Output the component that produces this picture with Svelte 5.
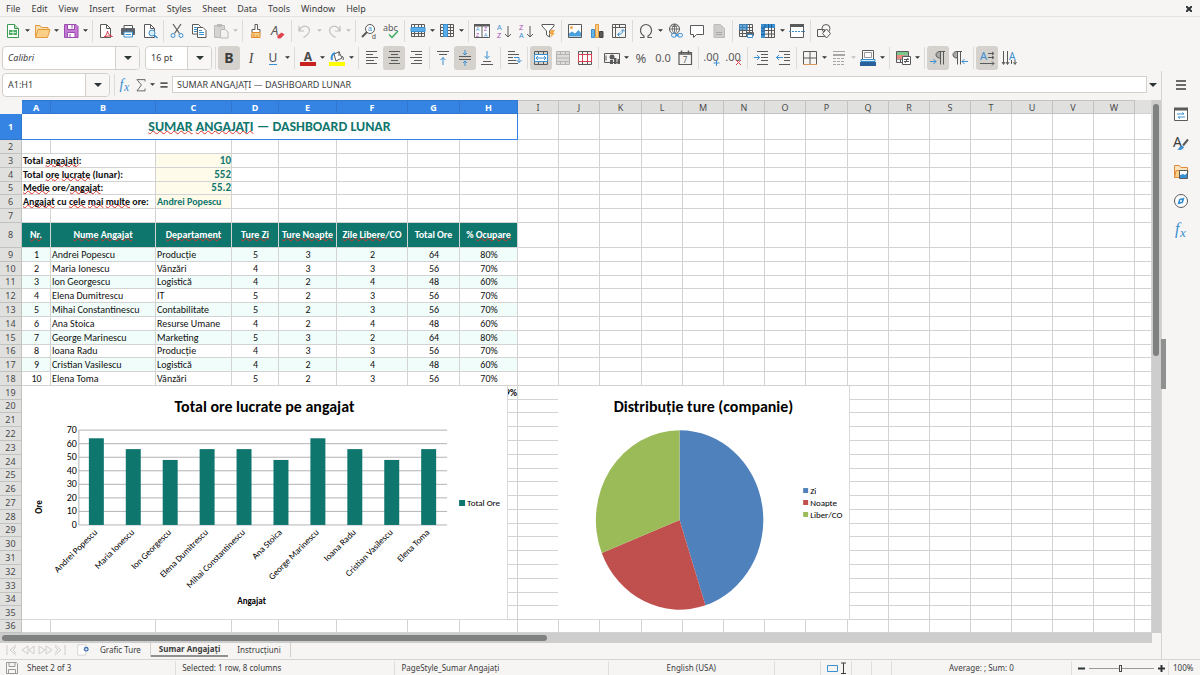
<script>
  const menus = ["File", "Edit", "View", "Insert", "Format", "Styles", "Sheet", "Data", "Tools", "Window", "Help"];

  const G = "#5a5a5a";
  const B = "#3a8fd0";

  function text(x, y, size, fill, str, extra = "") {
    return `<text x="${x}" y="${y}" font-family="Noto Sans, sans-serif" font-size="${size}" fill="${fill}" ${extra}>${str}</text>`;
  }
  function letter(x, y, size, fill, str) {
    return `<text x="${x}" y="${y}" font-family="Liberation Sans, sans-serif" font-size="${size}" fill="${fill}">${str}</text>`;
  }
  function line(d, stroke = G, width = 1) {
    return `<path d="${d}" fill="none" stroke="${stroke}" stroke-width="${width}"/>`;
  }
  const table = "M3.5 3.5h13v12h-13zM3.5 6.5h13M3.5 9.5h13M3.5 12.5h13M6.5 3.5v12M10.5 3.5v12M13.5 3.5v12";

  // every icon is drawn on a 20x20 canvas
  const icons = {
    new: `<path d="M4.500 3.500h7l4 4v9h-11z" fill="#fff" stroke="#3a9a52"/><path d="M11.500 3.500v4h4" fill="#b5e0bf" stroke="#3a9a52"/><path d="M6 9h8v5H6z" fill="#4caf63"/><path d="M7 11.500h6M10 9v5" stroke="#fff" stroke-width=".7"/>`,
    open: `<path d="M3.500 16V4.500h4.500l1.500 2h6.500v2" fill="#f9dfae" stroke="#e49a3c"/><path d="M3.500 16.500l2.500-8h12l-2.500 8z" fill="#fbcf85" stroke="#e49a3c"/>`,
    save: `<path d="M3.500 3.500h11.500l2 2v11h-13.500z" fill="#c479d3" stroke="#9c4bb0"/><path d="M6.500 3.500h7v5h-7z" fill="#fff" stroke="#9c4bb0"/><path d="M6.500 16.500v-5h7.500v5z" fill="#fff" stroke="#9c4bb0"/><path d="M11 4v3.500M9 13v3" stroke="#9c4bb0"/>`,
    pdf: `<path d="M4.500 3.500h6l4 4v9h-10z" fill="#fff" stroke="${G}"/>` + line("M10.500 3.500v4h4") + line("M8 16c2-1 3-3 3.500-6 .500 3 2 5 5 5.500-3-1-6-.500-8.500.500", "#d9404f"),
    print: `<path d="M6 7V4.500h8.500V7" fill="#fff" stroke="${G}"/><rect x="3" y="7" width="14" height="7" rx="1" fill="#5c6167"/><path d="M6 11h8.500v5H6z" fill="#fff" stroke="${B}"/>` + line("M7.500 13.500h5.500", B),
    preview: `<path d="M4.500 3.500h6l4 4v9h-10z" fill="#fff" stroke="${G}"/>` + line("M10.500 3.500v4h4") + `<circle cx="12" cy="12" r="3" fill="#d8ecf9" stroke="${B}"/>` + line("M14 14l3.500 3", B, 1.5),
    cut: line("M6 3l6.500 9.500M14 3L7.500 12.500", G, 1.2) + `<circle cx="6" cy="14.500" r="2" fill="none" stroke="${B}"/><circle cx="14" cy="14.500" r="2" fill="none" stroke="${B}"/>`,
    copy: `<path d="M3.500 3.500h6l2 2v7.500h-8z" fill="#fff" stroke="${G}"/>` + line("M5 6.500h4M5 8.500h4M5 10.500h3", B) + `<path d="M8.500 6.500h5.500l3 3v7h-8.500z" fill="#fff" stroke="${G}"/>` + line("M10 11.500h5M10 13.500h5M10 9.500h3", B),
    paste: `<path d="M3.500 4.500h10v12h-10z" fill="#d6d4d2" stroke="#bdbbb9"/><path d="M6 3h5v3H6z" fill="#bdbbb9"/><path d="M9.500 8.500h5l2.500 2.500v6h-7.500z" fill="#f2f2f1" stroke="#bdbbb9"/>`,
    brush: `<path d="M9 3.500h2.500v5H14v3H6v-3h3z" fill="#fff" stroke="${G}"/><path d="M6 11.500h8v5H5.500z" fill="#fbcf85" stroke="#e08a2c"/>` + line("M8 16v-3M11 16v-2", "#e08a2c"),
    clear: text(3, 14, 13, G, "A", 'font-style="italic"') + `<path d="M9 15l4.500-3.500 3 2-4 4h-2.500z" fill="#e0434b"/>`,
    undo: line("M4 5v5h5M4.500 9.500c1-3 4-5 7-4 4 1.500 4 6 0 9l-3 2", "#c2c0be", 1.2),
    redo: line("M16 5v5h-5M15.500 9.500c-1-3-4-5-7-4-4 1.500-4 6 0 9l3 2", "#c2c0be", 1.2),
    find: `<circle cx="11" cy="8" r="4.500" fill="#fff" stroke="${G}"/>` + line("M8 11l-5 5", G, 2) + letter(9, 10, 7, B, "a") + letter(13, 17.5, 7, "#444", "d"),
    spell: text(2, 10, 9, G, "abc") + line("M8 13.500l3 3 6-6.500", "#3bab62", 1.5),
    row: line(table) + `<path d="M3 6.500h14v4H3z" fill="#5aaee8" stroke="${B}"/>`,
    column: line(table) + `<path d="M6.500 3.500h4v12h-4z" fill="#5aaee8" stroke="${B}"/>`,
    sort: `<path d="M2.500 3.500h15v13h-15z" fill="#fff" stroke="${G}"/><path d="M2 3h16v2.500H2z" fill="${G}"/>` + line("M10 5v11", G) + letter(4, 10, 5, B, "A") + letter(4, 16, 5, "#a347ba", "Z") + letter(12, 10, 5, "#a347ba", "Z") + letter(12, 16, 5, B, "A"),
    asc: letter(3, 8.5, 7, B, "A") + letter(3, 17, 7, "#a347ba", "Z") + line("M14 5v11M11 13l3 3 3-3"),
    desc: letter(3, 8.5, 7, "#a347ba", "Z") + letter(3, 17, 7, B, "A") + line("M14 5v11M11 13l3 3 3-3"),
    filter: `<path d="M4 3.500h12v1.500l-4.500 5v6l-3-2v-4L4 5z" fill="#fff" stroke="${G}"/><path d="M13 9h4l-2 3h2l-5 5 1.500-4H11z" fill="#f3a64a"/>`,
    image: `<path d="M3.500 3.500h13v13h-13z" fill="#fff" stroke="${G}"/><path d="M4 15.500v-3l3-2 3 2 3.500-3.500 2.500 3v3.500z" fill="#4a9fdc"/><circle cx="6.500" cy="6.500" r="1.500" fill="#f3a64a"/>`,
    chart: `<path d="M4.500 8.500h3v8h-3z" fill="#6bb4e8" stroke="${B}"/><path d="M8.500 3.500h3v13h-3z" fill="#fbcf85" stroke="#e49a3c"/><path d="M12.500 10.500h3.500v6h-3.500z" fill="${G}" stroke="#444"/>`,
    pivot: line("M3.500 3.500h13v13h-13zM3.500 6.500h13M6.500 3.500v13M10.500 3.500v3") + line("M9 13.500c3 0 5-1.500 5-4.500M12 10.500l2-2 2 2M10.500 11.500l-2 2 2 2", B),
    omega: line("M4 16.500h4v-1.500c-2.500-1.500-3.500-3-3.500-5.500C4.500 6 7 3.500 10 3.500s5.500 2.500 5.500 6c0 2.500-1 4-3.500 5.500v1.500h4", G, 1.2),
    link: `<circle cx="9.500" cy="8" r="5" fill="none" stroke="${G}"/>` + line("M4.500 8h10M9.500 3v10M6 4.500c2 1.500 5 1.500 7 0M9.500 3c-3 3-3 7 0 10M9.500 3c3 3 3 7 0 10", G, 0.8) + `<rect x="6.500" y="12.500" width="5" height="3.500" rx="1.700" fill="#f6f5f4" stroke="${B}"/><rect x="12.500" y="12.500" width="5" height="3.500" rx="1.700" fill="#f6f5f4" stroke="${B}"/>` + line("M10 14.200h4", B),
    comment: `<path d="M3.500 4.500h13v9h-7l-3 3v-3h-3z" fill="#fff" stroke="${G}"/>`,
    header: `<path d="M5 3.500h6.500l4 4v9H5z" fill="#cfcdcb" stroke="#bdbbb9"/>` + line("M7 11.500h6M7 13.500h6", "#aaa"),
    printarea: line(table) + `<path d="M3 3h9v6H3z" fill="${B}" opacity=".75"/><rect x="10" y="11" width="8" height="4" rx="1" fill="#5c6167"/><path d="M11.500 13.500h5v3h-5z" fill="#fff" stroke="${B}"/>`,
    freeze: line("M3.500 3.500h13v13h-13zM3.500 9.500h13M3.500 13h13M10.500 3.500v13M13.500 3.500v13") + `<path d="M3 3h14v4H7v10H3z" fill="${B}"/>` + line("M7 3v4H3M10.500 3v4M13.500 3v4M3 10h4M3 13.500h4", "#205f94"),
    split: `<path d="M3.500 3.500h13v13h-13z" fill="#fff" stroke="${G}"/><path d="M3 3h14v3H3z" fill="${G}"/>` + `<path d="M2 10.500h16" stroke="${B}" stroke-dasharray="2 1"/>`,
    shapes: `<path d="M3.500 8.500h7v7h-7z" fill="none" stroke="${G}"/><circle cx="12" cy="7.500" r="4" fill="none" stroke="${G}"/>` + `<path d="M12.500 8l4 4.500-4 4.500-4-4.500z" fill="#f6f5f4" stroke="${G}"/>`,

    bold: text(10, 15, 14, "#3c3c3c", "B", 'font-weight="700" text-anchor="middle"'),
    italic: text(10, 15, 14, "#4a4a4a", "I", 'font-style="italic" text-anchor="middle" style="font-family:Liberation Serif"'),
    underline: text(10, 14, 12, "#4a4a4a", "U", 'text-anchor="middle"') + line("M6 16.500h8", B),
    color: text(10, 13, 12, "#4a4a4a", "A", 'text-anchor="middle" font-weight="700"') + `<path d="M2 14h16v4H2z" fill="#c9211e"/>`,
    fill: `<path d="M7 6l5-2 3 6-6 3z" fill="#fff" stroke="${G}"/>` + line("M5 12c-1-3 0-6 3-7", B, 2) + line("M12 3v5M15 8c1.500 1 1.500 3 1 4") + `<path d="M2 14h16v4H2z" fill="#ffff00"/>`,
    left: line("M4 3.500h11M4 6.500h7M4 9.500h12M4 12.500h8M4 15.500h11"),
    center: line("M5 3.500h11M7 6.500h7M4 9.500h12M7 12.500h7M5 15.500h11"),
    right: line("M5 3.500h11M9 6.500h7M4 9.500h12M8 12.500h8M5 15.500h11"),
    top: line("M4 3.500h12M6 6.500h8") + line("M10 17V9.500M7.500 12L10 9.500l2.500 2.500", B),
    middle: line("M4 8.500h12M4 11.500h12") + line("M10 2v5M8 5l2 2 2-2M10 18v-5M8 15l2-2 2 2", B),
    bottom: line("M6 13.500h8M4 16.500h12") + line("M10 3v7.500M7.500 8l2.500 2.500L12.500 8", B),
    wrap: line("M4 3.500h7M4 6.500h11M4 9.500h5M4 12.500h8M4 15.500h10") + line("M10 9.500h5v5M12.500 12l2.500 2.500 2.500-2.500", B),
    merge: line("M3.500 3.500h13v13h-13zM7.500 3.500v3M12.500 3.500v3M7.500 13.500v3M12.500 13.500v3") + `<path d="M3.500 6.500h13v7h-13z" fill="#fff" stroke="${B}"/>` + line("M5 10h10M7 8l-2 2 2 2M13 8l2 2-2 2", B),
    unmerge: `<path d="M3.500 3.500h13v13h-13z" fill="#dddbd9" stroke="#b5b3b1"/>` + line("M3.500 6.500h13M3.500 13.500h13M3.500 10h13M7.500 3.500v3M12.500 3.500v3M7.500 13.500v3M12.500 13.500v3", "#b5b3b1"),
    splitcells: line("M3.500 3.500h13v13h-13zM7.500 3.500v3M12.500 3.500v3M7.500 13.500v3M12.500 13.500v3") + `<path d="M3.500 6.500h13v7h-13zM7.500 6.500v7M12.500 6.500v7" fill="#fff" stroke="#d9404f"/>`,
    currency: `<path d="M2.500 5.500h15v9h-15z" fill="none" stroke="${G}"/><circle cx="10" cy="9" r="2.500" fill="${G}"/><path d="M8 12h3v4H8zM12 10h2.500v6H12zM15.500 11H18v5h-2.500z" fill="${G}"/>` + line("M4 7.500v5"),
    percent: text(10, 15, 13, G, "%", 'text-anchor="middle"'),
    number: text(10, 14, 11, G, "0.0", 'text-anchor="middle"'),
    date: `<path d="M4 4.500h12.500v12H4z" fill="none" stroke="${G}" stroke-width="1.200"/>` + line("M4 6h12.500M6.500 2.500v3M13.500 2.500v3", G, 1.5) + text(10, 15, 8, G, "7", 'text-anchor="middle"'),
    adddec: text(9, 13, 11, G, ".00", 'text-anchor="middle"') + line("M14.500 12v6M11.500 15h6", B),
    deldec: text(9, 13, 11, G, ".00", 'text-anchor="middle"') + line("M12 12l5 5M17 12l-5 5", "#e0434b"),
    indent: line("M6 3.500h11M10 6.500h7M10 9.500h7M10 12.500h7M6 16.500h11") + line("M3 9.500h6M6 7l2.500 2.500L6 12", B),
    outdent: line("M6 3.500h11M11 6.500h6M11 9.500h6M11 12.500h6M6 16.500h11") + line("M3 9.500h7M6 7L3.500 9.500 6 12", B),
    borders: line("M3.500 3.500h13v13h-13zM10 3.500v13M3.500 10h13") + line("M3 16.500h14", "#d9995a"),
    style: line("M4 3.500h12", "#a8a6a4") + line("M4 6.500h12M4 7.500h12", "#a8a6a4") + `<path d="M4 10.500h12M4 13.500h12M4 16.500h12" stroke="#a8a6a4" stroke-dasharray="3 1"/>`,
    background: `<path d="M4.500 2.500h11v9h-11z" fill="#fff" stroke="${G}"/><path d="M6.500 4.500h7v5h-7z" fill="#fff" stroke="#9a9a9a"/><path d="M3 11.500h14v2H3z" fill="#dcedf8" stroke="${B}"/><path d="M2 14h16v4H2z" fill="#2a6099"/>`,
    cond: line("M3.500 3.500h12v11h-12zM3.500 7h12M3.500 11h12M7.500 3.500v11") + `<path d="M4 4h11v3H4z" fill="#7cc68b"/><path d="M4 7h7v4H4z" fill="#ef8a80"/><path d="M9.500 8.500h8v8h-8z" fill="#fff" stroke="${G}"/>` + line("M11 11.500h5M11 13.500h5M15 10l-3 5"),
    ltr: line("M11 3.500h6M12.500 3.500v13M15.500 3.500v13") + `<path d="M12.500 3.500c-6-.500-6 7 0 6.500z" fill="#aaa" stroke="${G}"/>` + line("M2 13.500h6M5.500 11L8 13.500 5.500 16", B),
    rtl: line("M6 3.500h6M7.500 3.500v13M10.500 3.500v13") + `<path d="M7.500 3.500c-6-.500-6 7 0 6.500z" fill="#aaa" stroke="${G}"/>` + line("M18 13.500h-6M14.500 11L12 13.500l2.500 2.500", B),
    textrow: text(3, 12, 11, B, "A") + line("M11 5.500h6M11 9.500h6M3 15.500h14M15 4l2 1.500-2 1.500M15 8l2 1.500-2 1.500M15 13.500l2 2-2 2"),
    textcol: text(10, 12, 10, B, "A") + line("M4.500 3v13M8.500 3v13M12.500 12v4M16 12v4M3 14l1.500 2.500L6 14M7 14l1.500 2.500L10 14M14.500 14l1.500 2.500 1.500-2.500"),

    fx: text(4, 14, 16, B, "f", 'font-style="italic" style="font-family:Liberation Serif"') + text(9, 17, 13, B, "x", 'font-style="italic" style="font-family:Liberation Serif"'),
    sum: line("M14.500 6V4h-9l5 6-5 6.500h9V14", G),
    equals: line("M6 8h8M6 12h8", G, 2),
    menu: line("M5 6h10M5 10h10M5 14h10", "#3c3c3c", 1.5),
    properties: `<path d="M3.500 4.500h13v12h-13z" fill="#fff" stroke="${G}"/><path d="M3 3.500h14v3H3z" fill="${G}"/>` + line("M6 10h7M11 8.500l2 1.500M14 13H7M9 14.500L7 13", B),
    styles: text(2, 14, 14, "#3c3c3c", "A") + line("M17 6.500l-5 6", G, 2) + `<path d="M6 16.500c2 0 2-3 4.500-4l2.500 1.500c-1 3-4 3.500-7 2.500z" fill="${B}"/>`,
    gallery: `<path d="M3.500 15.500v-12h5l1.500 2h6.500v3" fill="#fbe3bd" stroke="#e08a3c"/><path d="M3.500 15.500l1.500-7h12l-1 7z" fill="#fbcf85" stroke="#e08a3c"/><path d="M8.500 8.500h8v8h-8z" fill="#fff" stroke="${G}"/><path d="M9 16v-3l3-1 2 1 2-2v5z" fill="${B}"/>`,
    navigator: `<circle cx="10" cy="10" r="6.500" fill="#fff" stroke="${G}"/><path d="M13.500 6.500l-1.500 5.500-5.500 1.500L8 8z" fill="${B}"/><circle cx="10" cy="10" r="1" fill="#fff"/>`,
    floppy: `<path d="M4.500 4.500h10l1 1v10h-11z" fill="none" stroke="#9a9a9a"/>` + line("M7 4.500v4h6v-4M6.500 15.500v-4h7v4", "#9a9a9a"),
    addsheet: `<path d="M3.500 3.500h10v13h-10z" fill="#fff" stroke="#cfcdcb"/><circle cx="14" cy="9" r="3" fill="#2c5fae"/>` + line("M12 9h4M14 7v4", "#fff"),
  };

  // "|" draws a separator, "+" puts a drop-down arrow after the icon, "*" marks a pressed one
  const standard = "new+ open+ save+ | pdf print preview | cut copy paste+ | brush clear | undo+ redo+ | find spell | row+ column+ | sort asc desc filter | image chart pivot | omega+ link comment header | printarea freeze+ split | shapes".split(" ");
  const formatting = "bold* italic underline+ | color+ fill+ | left center* right | top middle* bottom | wrap | merge* unmerge splitcells | currency+ percent number date | adddec deldec | indent outdent | borders+ style+ background+ | cond+ | ltr* rtl | textrow* textcol".split(" ");
  const sidebar = ["menu", "properties", "styles", "gallery", "navigator", "fx"];
  const dimmed = ["paste", "undo", "redo", "style"];

  const letters = "ABCDEFGHIJKLMNOPQRSTUVW".split("");
  const widths = [29, 105, 76, 47, 58, 71, 52, 58, 41, 41, 42, 41, 41, 41, 41, 42, 41, 41, 41, 41, 41, 41, 41];
  const blanks = letters.slice(8).concat("X");

  // "~" on either side marks a misspelled word
  const summary = [
    { label: "Total ~angajați~:", value: "10" },
    { label: "Total ~ore~ ~lucrate~ (lunar):", value: "552" },
    { label: "~Medie~ ore/~angajat~:", value: "55.2" },
    { label: "~Angajat~ cu ~cele~ ~mai~ ~multe~ ore:", value: "Andrei Popescu" },
  ];
  const heads = ["~Nr.~", "~Nume~ ~Angajat~", "~Departament~", "~Ture Zi~", "~Ture Noapte~", "~Zile Libere~/CO", "Total Ore", "% ~Ocupare~"];
  const staff = [
    ["Andrei Popescu", "Producție", 5, 3, 2, 64, "80%"],
    ["Maria Ionescu", "Vânzări", 4, 3, 3, 56, "70%"],
    ["Ion Georgescu", "Logistică", 4, 2, 4, 48, "60%"],
    ["Elena Dumitrescu", "IT", 5, 2, 3, 56, "70%"],
    ["Mihai Constantinescu", "Contabilitate", 5, 2, 3, 56, "70%"],
    ["Ana Stoica", "Resurse Umane", 4, 2, 4, 48, "60%"],
    ["George Marinescu", "Marketing", 5, 3, 2, 64, "80%"],
    ["Ioana Radu", "Producție", 4, 3, 3, 56, "70%"],
    ["Cristian Vasilescu", "Logistică", 4, 2, 4, 48, "60%"],
    ["Elena Toma", "Vânzări", 5, 2, 3, 56, "70%"],
  ];
  const rest = Array.from({ length: 18 }, (_, i) => 19 + i);

  function rowHeight(n) {
    if (n === 1) return 26;
    if (n === 8) return 25;
    return [5, 11, 16, 20, 25, 29, 34, 36].includes(n) ? 13 : 14;
  }

  const ticks = [0, 10, 20, 30, 40, 50, 60, 70];
  const y = (v) => 139 - (v * 95) / 70;
  const x = (i) => 57 + 37 * i + 18;

  const shares = [
    { label: "Zi", value: 45, color: "#4f81bd" },
    { label: "Noapte", value: 24, color: "#c0504d" },
    { label: "Liber/CO", value: 31, color: "#9bbb59" },
  ];
  function slice(i) {
    const from = shares.slice(0, i).reduce((sum, s) => sum + s.value, 0);
    const to = from + shares[i].value;
    const at = (v) => {
      const a = (v / 100) * 2 * Math.PI;
      return `${122 + 84 * Math.sin(a)} ${134 - 90 * Math.cos(a)}`;
    };
    return `M122 134L${at(from)}A84 90 0 0 1 ${at(to)}z`;
  }
</script>

{#snippet icon(name)}
  <svg class="icon" viewBox="0 0 20 20" aria-hidden="true">{@html icons[name]}</svg>
{/snippet}

{#snippet arrow()}
  <svg class="arrow" viewBox="0 0 8 4" aria-hidden="true"><path d="M0 0h8L4 4z" /></svg>
{/snippet}

{#snippet tools(list)}
  {#each list as item}
    {#if item === "|"}
      <span class="sep"></span>
    {:else}
      {@const name = item.replace(/[+*]/, "")}
      <button class="tool" class:pressed={item.endsWith("*")} aria-label={name}>{@render icon(name)}</button>
      {#if item.endsWith("+")}
        <button class="drop" class:dim={dimmed.includes(name)} aria-label="{name} options">{@render arrow()}</button>
      {/if}
    {/if}
  {/each}
{/snippet}

{#snippet words(str)}{#each str.split("~") as part, i}{#if i % 2}<span class="typo">{part}</span>{:else}{part}{/if}{/each}{/snippet}

{#snippet empty(cols)}{#each cols as _}<td></td>{/each}{/snippet}

<div class="app">
  <header>
    <nav class="menubar">
      {#each menus as menu}
        <button>{menu}</button>
      {/each}
      <button class="close" aria-label="Close"><svg viewBox="0 0 6 6"><path d="M0 0l6 6M6 0L0 6" /></svg></button>
    </nav>
    <div class="toolbar">{@render tools(standard)}</div>
    <div class="toolbar">
      <label class="combo font">
        <select aria-label="Font name"><option>Calibri</option></select>
        <span>{@render arrow()}</span>
      </label>
      <label class="combo size">
        <select aria-label="Font size"><option>16 pt</option></select>
        <span>{@render arrow()}</span>
      </label>
      <span class="sep"></span>
      {@render tools(formatting)}
    </div>
  </header>

  <div class="work">
    <main>
      <div class="formula">
        <div class="combo name">
          <input aria-label="Name box" value="A1:H1" />
          <button aria-label="Named ranges">{@render arrow()}</button>
        </div>
        <span class="sep"></span>
        <button class="small" aria-label="Function wizard">{@render icon("fx")}</button>
        <button class="small" aria-label="Sum">{@render icon("sum")}</button>
        <button class="drop" aria-label="Sum options">{@render arrow()}</button>
        <button class="small" aria-label="Formula">{@render icon("equals")}</button>
        <input class="line" aria-label="Input line" value="SUMAR ANGAJAȚI — DASHBOARD LUNAR" />
        <button class="expand" aria-label="Expand">{@render arrow()}</button>
      </div>

      <div class="pane">
        <div class="sheet">
          <table>
            <colgroup>
              <col style="width: 22px" />
              {#each widths as w}
                <col style="width: {w}px" />
              {/each}
              <col />
            </colgroup>
            <thead>
              <tr>
                <td class="corner"></td>
                {#each letters as letter, i}
                  <th scope="col" class:on={i < 8}>{letter}</th>
                {/each}
                <td class="edge"></td>
              </tr>
            </thead>
            <tbody>
              <tr style="height: {rowHeight(1)}px">
                <th scope="row" class="on">1</th>
                <td class="title" colspan="8">{@render words("~SUMAR~ ~ANGAJAȚI~ — DASHBOARD LUNAR")}</td>
                {@render empty(blanks)}
              </tr>
              <tr style="height: {rowHeight(2)}px">
                <th scope="row">2</th>
                {@render empty([...letters, "X"])}
              </tr>
              {#each summary as { label, value }, i}
                <tr style="height: {rowHeight(3 + i)}px">
                  <th scope="row">{3 + i}</th>
                  <td class="label" colspan="2">{@render words(label)}</td>
                  <td class="value" class:number={i < 3}>{value}</td>
                  {@render empty(letters.slice(2))}
                </tr>
              {/each}
              <tr style="height: {rowHeight(7)}px">
                <th scope="row">7</th>
                {@render empty([...letters, "X"])}
              </tr>
              <tr style="height: {rowHeight(8)}px">
                <th scope="row">8</th>
                {#each heads as head}
                  <td class="head">{@render words(head)}</td>
                {/each}
                {@render empty(blanks)}
              </tr>
              {#each staff as person, i}
                <tr class:even={i % 2 === 0} style="height: {rowHeight(9 + i)}px">
                  <th scope="row">{9 + i}</th>
                  <td class="data mid">{i + 1}</td>
                  {#each person as cell, j}
                    <td class="data" class:mid={j > 1}>{cell}</td>
                  {/each}
                  {@render empty(blanks)}
                </tr>
              {/each}
              {#each rest as n}
                <tr style="height: {rowHeight(n)}px">
                  <th scope="row">{n}</th>
                  {@render empty(letters.slice(0, 7))}
                  <td class="total">{n === 19 ? "69%" : ""}</td>
                  {@render empty(blanks)}
                </tr>
              {/each}
            </tbody>
          </table>

          <svg class="chart bars" viewBox="0 0 486 233" role="img" aria-label="Total ore lucrate pe angajat">
            <text class="heading" x="243" y="26">Total ore lucrate pe angajat</text>
            {#each ticks as t}
              <path class="grid" d="M57 {y(t)}H426" />
              <text class="tick" x="55" y={y(t) + 3}>{t}</text>
            {/each}
            <path class="grid" d="M57 44V139" />
            {#each staff as person, i}
              <rect x={x(i) - 8} y={y(person[5])} width="15" height={139 - y(person[5])} fill="#0f766e" />
              <text class="who" transform="translate({x(i) + 1} 147) rotate(-45)">{person[0]}</text>
            {/each}
            <text class="axis" transform="translate(20 121) rotate(-90)">Ore</text>
            <text class="axis" x="230" y="218">Angajat</text>
            <rect x="438" y="114" width="6" height="6" fill="#0f766e" />
            <text class="legend" x="446" y="120">Total Ore</text>
          </svg>

          <svg class="chart pie" viewBox="0 0 292 233" role="img" aria-label="Distribuție ture (companie)">
            <text class="heading" x="146" y="26">Distribuție ture (companie)</text>
            {#each shares as share, i}
              <path d={slice(i)} fill={share.color} />
              <rect x="246" y={102 + i * 12} width="5" height="5" fill={share.color} />
              <text class="legend" x="253" y={108 + i * 12}>{share.label}</text>
            {/each}
          </svg>
        </div>
        <div class="vscroll"><i></i></div>
        <div class="grip"></div>
      </div>
      <div class="hscroll"><i></i></div>

      <div class="tabs">
        <svg class="nav" viewBox="0 0 60 12" aria-hidden="true">
          <path d="M1 1v10M10 1L4 6l6 5M10 3L7 6l3 3M22 2l-6 4 6 4zM28 2l-5 4 5 4zM33 2l6 4-6 4zM40 2l6 4-6 4zM49 1l6 5-6 5M49 3l3 3-3 3M59 1v10" />
        </svg>
        <button class="small" aria-label="Add sheet">{@render icon("addsheet")}</button>
        <button class="tab">Grafic Ture</button>
        <button class="tab current">Sumar Angajați</button>
        <button class="tab">Instrucțiuni</button>
      </div>
    </main>

    <aside>
      {#each sidebar as name}
        <button aria-label={name}>{@render icon(name)}</button>
      {/each}
    </aside>
  </div>

  <footer>
    <span class="saved">{@render icon("floppy")}</span>
    <span class="sheets">Sheet 2 of 3</span>
    <span class="selected">Selected: 1 row, 8 columns</span>
    <span class="style">PageStyle_Sumar Angajați</span>
    <span class="language">English (USA)</span>
    <span class="gap"></span>
    <span class="mode">
      <svg viewBox="0 0 20 12" aria-hidden="true">
        <path d="M.5 3.500h10v6H.5z" stroke="#3a8fd0" /><path d="M14 1h5M14 11.500h5M16.500 1v10.500" stroke="#3c3c3c" />
      </svg>
    </span>
    <span class="tiny"></span>
    <span class="tiny"></span>
    <span class="sum">Average: ; Sum: 0</span>
    <span class="zoom">
      <button aria-label="Zoom out"><svg viewBox="0 0 7 7"><path d="M0 3.500h7" /></svg></button>
      <input type="range" aria-label="Zoom" min="0" max="100" value="48" />
      <button aria-label="Zoom in"><svg viewBox="0 0 7 7"><path d="M0 3.500h7M3.500 0v7" /></svg></button>
    </span>
    <span class="percent">100%</span>
  </footer>
</div>

<style>
  :global(body) {
    margin: 0;
    background: #f6f5f4;
  }

  .app {
    display: flex;
    flex-direction: column;
    min-height: 100vh;
    background: #f6f5f4;
    color: #3c3c3c;
    font: 9px/12px "Noto Sans", sans-serif;
  }

  .app,
  .app * {
    box-sizing: border-box;
  }

  button,
  input,
  select {
    margin: 0;
    padding: 0;
    border: 0;
    background: none;
    color: inherit;
    font: inherit;
  }

  button {
    display: flex;
    align-items: center;
    justify-content: center;
    flex: none;
  }

  .icon {
    display: block;
    flex: none;
    width: 20px;
    height: 20px;
  }

  .arrow {
    display: block;
    width: 8px;
    height: 4px;
    fill: #2e3436;
  }

  .menubar {
    display: flex;
    align-items: center;
    gap: 11px;
    height: 17px;
    padding: 1px 8px 0 6px;
    border-bottom: 1px solid #e4e2e0;
  }

  .close {
    margin-left: auto;
  }

  .close svg {
    width: 6px;
    height: 6px;
    fill: none;
    stroke: #2e3436;
    stroke-width: 2;
  }

  .toolbar {
    display: flex;
    align-items: center;
    height: 27px;
    padding-left: 2px;
  }

  .tool {
    width: 22px;
    height: 24px;
    border-radius: 3px;
  }

  .pressed {
    background: #d5d1cd;
  }

  .drop {
    width: 7px;
    height: 24px;
  }

  .drop .arrow {
    width: 5px;
    height: 3px;
  }

  .dim .arrow {
    fill: #c2c0be;
  }

  .sep {
    flex: none;
    width: 5px;
    height: 22px;
    background: linear-gradient(#dddbd8, #dddbd8) center / 1px 100% no-repeat;
  }

  .drop + .sep {
    width: 6px;
  }

  .combo {
    display: flex;
    flex: none;
    height: 24px;
    border: 1px solid #d3d0cc;
    border-radius: 4px;
    background: #fff;
    overflow: hidden;
  }

  .combo select,
  .combo input {
    flex: 1;
    min-width: 0;
    padding-left: 5px;
    appearance: none;
  }

  .combo span,
  .combo button {
    display: flex;
    align-items: center;
    justify-content: center;
    width: 24px;
    border-left: 1px solid #d3d0cc;
    background: #f8f7f6;
  }

  .font {
    width: 138px;
    font-style: italic;
  }

  .size {
    width: 67px;
    margin: 0 1px 0 5px;
  }

  .work {
    display: flex;
    flex: 1;
  }

  main {
    display: flex;
    flex: 1;
    flex-direction: column;
    min-width: 0;
    border-right: 1px solid #d6d4d1;
  }

  .formula {
    display: flex;
    align-items: center;
    height: 29px;
    padding: 0 2px 2px;
  }

  .name {
    width: 108px;
    margin-right: 2px;
  }

  .small {
    width: 16px;
    height: 16px;
  }

  .formula .small .icon {
    width: 18px;
    height: 18px;
  }

  .line {
    flex: 1;
    min-width: 0;
    height: 17px;
    padding: 0 4px;
    border: 1px solid #d3d0cc;
    background: #fff;
  }

  .expand {
    width: 12px;
  }

  .pane {
    position: relative;
    display: flex;
    flex: 1;
  }

  .sheet {
    position: relative;
    flex: 1;
    min-width: 0;
    overflow: hidden;
    background: #fff;
  }

  table {
    width: 100%;
    table-layout: fixed;
    border-collapse: separate;
    border-spacing: 0;
    line-height: 12px;
  }

  td,
  th {
    padding: 0;
    border: solid #d3d3d3;
    border-width: 0 1px 1px 0;
    white-space: nowrap;
  }

  th {
    background: #e0e0df;
    border-color: #c2c2c1;
    color: #4a4a4a;
    font-weight: 400;
    text-align: center;
  }

  thead tr {
    height: 14px;
  }

  thead th {
    border-top: 1px solid #c2c2c1;
    line-height: 11px;
  }

  th.on {
    background: #3584e4;
    border-color: #2f76cc;
    color: #fff;
    font-weight: 700;
  }

  .corner {
    border-color: #f6f5f4;
    background: #f6f5f4;
  }

  .edge {
    background: #e0e0df;
  }

  .title,
  .label,
  .value,
  .head,
  .data,
  .total,
  .chart {
    font-family: Carlito, Lato, sans-serif;
  }

  .title {
    border-color: #3584e4;
    color: #0f766e;
    font-size: 14px;
    font-weight: 700;
    text-align: center;
  }

  .label {
    padding-left: 1px;
    color: #111;
    font-size: 10px;
    font-weight: 700;
  }

  .value {
    padding-left: 1px;
    background: #fffbeb;
    color: #0f766e;
    font-size: 10px;
    font-weight: 700;
  }

  .number {
    font-size: 11px;
    text-align: right;
  }

  .head {
    background: #0f766e;
    color: #fff;
    font-size: 10px;
    font-weight: 700;
    text-align: center;
  }

  .data {
    padding-left: 1px;
    color: #111;
    font-size: 10px;
  }

  .mid {
    text-align: center;
  }

  .even .data {
    background: #f0fdfa;
  }

  .total {
    color: #111;
    font-size: 10px;
    font-weight: 700;
    text-align: right;
  }

  .typo {
    text-decoration: underline wavy #d8322c 1px;
    text-decoration-skip-ink: none;
    text-underline-offset: -1px;
  }

  .chart {
    position: absolute;
    top: 286px;
    height: 234px;
    border: solid #d9d9d9;
    border-width: 0 1px 1px 0;
    background: #fff;
    font-size: 10px;
  }

  .bars {
    left: 22px;
    width: 486px;
  }

  .pie {
    left: 558px;
    width: 292px;
  }

  .heading {
    font-size: 16px;
    font-weight: 700;
    text-anchor: middle;
  }

  .grid {
    stroke: #b3b3b3;
  }

  .tick {
    text-anchor: end;
  }

  .who {
    font-size: 9px;
    text-anchor: end;
  }

  .axis {
    font-size: 9px;
    font-weight: 700;
    text-anchor: middle;
  }

  .legend {
    font-size: 9px;
  }

  .vscroll {
    width: 9px;
    padding: 4px 2px 4px 1px;
    background: #cdcdcd;
  }

  .vscroll i {
    display: block;
    height: 48%;
    border-radius: 3px;
    background: #7f8080;
  }

  .grip {
    position: absolute;
    top: 239px;
    right: -5px;
    width: 5px;
    height: 50px;
    background: #8f9090;
  }

  .hscroll {
    height: 10px;
    margin-right: 9px;
    padding: 2px;
    background: #cdcdcd;
  }

  .hscroll i {
    display: block;
    width: 47.5%;
    height: 6px;
    border-radius: 3px;
    background: #7f8080;
  }

  .tabs {
    display: flex;
    align-items: center;
    height: 16px;
    padding: 0 0 2px 6px;
    font-size: 8px;
  }

  .nav {
    width: 60px;
    height: 12px;
    margin-right: 9px;
    fill: none;
    stroke: #cfcdcb;
  }

  .tabs .small .icon {
    width: 16px;
    height: 16px;
  }

  .tab {
    height: 14px;
    padding: 0 9px;
    border-right: 1px solid #d3d0cc;
  }

  .current {
    padding: 0 8px;
    border-right: 0;
    border-bottom: 2px solid #8f9090;
    font-weight: 700;
  }

  aside {
    display: flex;
    flex-direction: column;
    align-items: center;
    gap: 9px;
    width: 38px;
    padding-top: 4px;
  }

  footer {
    display: flex;
    align-items: center;
    height: 17px;
    border-top: 1px solid #d6d4d1;
    font-size: 8px;
  }

  footer > span {
    display: flex;
    align-items: center;
    height: 14px;
    padding-left: 6px;
    border-left: 1px solid #e0dedb;
  }

  footer .saved {
    width: 27px;
    padding-left: 2px;
    border: 0;
  }

  footer .sheets {
    flex: 1 0 148px;
    padding: 0;
    border: 0;
  }

  footer .selected {
    flex: 1 0 219px;
  }

  footer .style {
    flex: 1 0 213px;
  }

  footer .language {
    flex: 1 0 166px;
    justify-content: center;
    padding: 0;
  }

  footer .gap {
    flex: none;
    width: 46px;
  }

  footer .mode {
    width: 31px;
  }

  .mode svg {
    width: 20px;
    height: 12px;
    fill: none;
  }

  footer .tiny {
    width: 20px;
  }

  footer .sum {
    flex: 1 0 180px;
    justify-content: center;
    padding: 0;
  }

  footer .zoom {
    gap: 4px;
    width: 97px;
  }

  .zoom svg {
    width: 7px;
    height: 7px;
    stroke: #2e3436;
    stroke-width: 2;
  }

  .zoom input {
    width: 65px;
    height: 8px;
    appearance: none;
    background: linear-gradient(#9a9a98, #9a9a98) center / 100% 1px no-repeat;
  }

  .zoom input::-webkit-slider-thumb {
    width: 3px;
    height: 7px;
    border: 1px solid #4a4a4a;
    background: #f6f5f4;
    appearance: none;
  }

  footer .percent {
    width: 32px;
    padding-left: 4px;
  }
</style>
